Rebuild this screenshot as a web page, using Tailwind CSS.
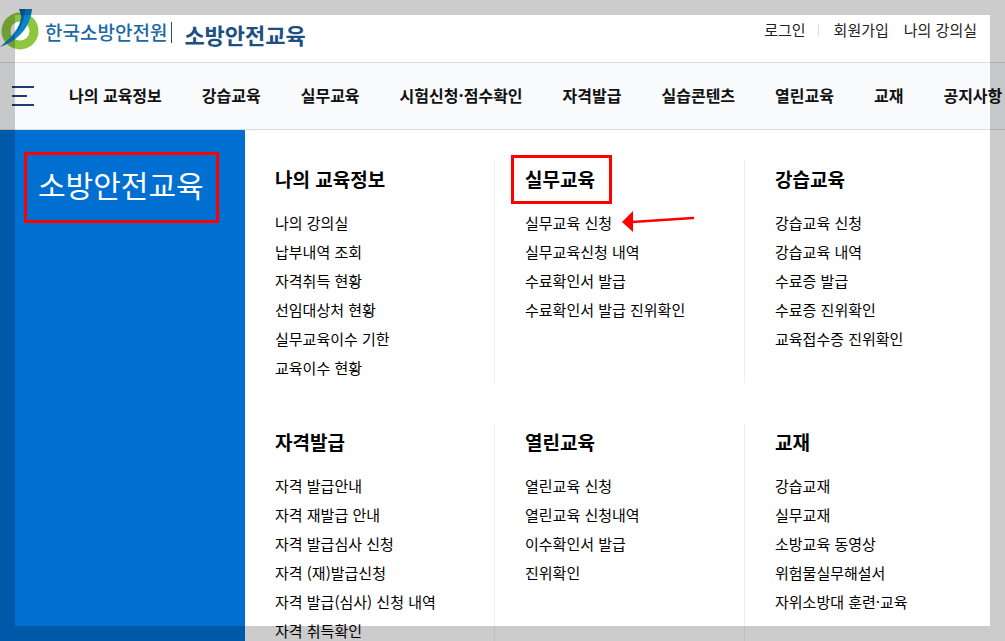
<!DOCTYPE html>
<html lang="ko">
<head>
    <meta charset="UTF-8" />
    <meta name="viewport" content="width=device-width, initial-scale=1" />
    <title>소방안전교육</title>
    <script src="https://cdn.jsdelivr.net/npm/@tailwindcss/browser@4"></script>
</head>
<body class="relative w-[1005px] h-[641px] overflow-hidden bg-white text-black font-['Noto_Sans_CJK_KR','Noto_Sans',sans-serif]">

<!-- Top bar -->
<header class="h-[63px] border-b border-[#dcdcdc] flex justify-between">
    <div class="flex items-start pt-[9px]">
        <svg class="w-[42px] h-[42px] shrink-0" viewBox="0 0 42 42">
            <circle cx="20" cy="22" r="18.5" fill="#8dc63f"/>
            <circle cx="20" cy="22" r="9.5" fill="#fff"/>
            <path d="M19 0 L32 0 C31 13 23 30 0 38 C10 30 21 18 21 8 C21 4 20 2 19 0 Z" fill="#0a84c6"/>
            <path d="M19 0 L25 0 C25 8 22 18 15 26 C19 18 21 12 21 8 C21 4 20 2 19 0 Z" fill="#0b5ea8"/>
        </svg>
        <span class="ml-[3px] mt-[9px] text-[19px] leading-[28px] text-[#1b6aa5] font-medium">한국소방안전원</span>
        <span class="ml-[4px] mt-[13px] h-[21px] w-px bg-[#1c4f82]"></span>
        <span class="ml-[12px] mt-[11px] text-[22px] leading-[28px] text-[#1c4f82] font-bold">소방안전교육</span>
    </div>
    <div class="flex items-start pt-[20px] pr-[28px] text-[15px] leading-[20px] text-[#222]">
        <a>로그인</a>
        <span class="ml-[12px] mr-[15px] mt-[4px] h-[12px] w-px bg-[#ddd]"></span>
        <a>회원가입</a>
        <a class="ml-[15px]">나의 강의실</a>
    </div>
</header>

<!-- Main nav -->
<nav class="h-[67px] border-b border-[#dcdcdc] bg-[#f8fafc] flex items-center whitespace-nowrap">
    <div class="ml-[12px] mr-[35px] w-[22px] flex flex-col gap-[7px]">
        <span class="h-[2px] w-[22px] bg-[#1c3f73]"></span>
        <span class="h-[2px] w-[15px] bg-[#1c3f73]"></span>
        <span class="h-[2px] w-[22px] bg-[#1c3f73]"></span>
    </div>
    <div class="flex gap-[40px] pb-[2px] text-[16px] font-bold text-[#111]">
        <a>나의 교육정보</a>
        <a>강습교육</a>
        <a>실무교육</a>
        <a>시험신청·점수확인</a>
        <a>자격발급</a>
        <a>실습콘텐츠</a>
        <a>열린교육</a>
        <a>교재</a>
        <a>공지사항</a>
    </div>
</nav>

<!-- Mega menu -->
<main class="flex h-[511px]">
    <aside class="w-[245px] shrink-0 bg-[#006fd2] pl-[38px] pt-[32px]">
        <h1 class="text-[30px] leading-[44px] text-white">소방안전교육</h1>
    </aside>
    <div class="grid grid-cols-[250px_250px_250px] grid-rows-[223px_auto] gap-y-[40px] pt-[30px] text-[15px]">
        <section class="pl-[30px] border-r border-[#eeeeee]">
            <h2 class="text-[19px] font-bold leading-[38px] mb-[10px]">나의 교육정보</h2>
            <ul class="[&>li]:h-[29px] [&>li]:leading-[29px]">
                <li>나의 강의실</li>
                <li>납부내역 조회</li>
                <li>자격취득 현황</li>
                <li>선임대상처 현황</li>
                <li>실무교육이수 기한</li>
                <li>교육이수 현황</li>
            </ul>
        </section>
        <section class="pl-[30px] border-r border-[#eeeeee]">
            <h2 class="text-[19px] font-bold leading-[38px] mb-[10px]">실무교육</h2>
            <ul class="[&>li]:h-[29px] [&>li]:leading-[29px]">
                <li>실무교육 신청</li>
                <li>실무교육신청 내역</li>
                <li>수료확인서 발급</li>
                <li>수료확인서 발급 진위확인</li>
            </ul>
        </section>
        <section class="pl-[30px]">
            <h2 class="text-[19px] font-bold leading-[38px] mb-[10px]">강습교육</h2>
            <ul class="[&>li]:h-[29px] [&>li]:leading-[29px]">
                <li>강습교육 신청</li>
                <li>강습교육 내역</li>
                <li>수료증 발급</li>
                <li>수료증 진위확인</li>
                <li>교육접수증 진위확인</li>
            </ul>
        </section>
        <section class="pl-[30px] border-r border-[#eeeeee]">
            <h2 class="text-[19px] font-bold leading-[38px] mb-[10px]">자격발급</h2>
            <ul class="[&>li]:h-[29px] [&>li]:leading-[29px]">
                <li>자격 발급안내</li>
                <li>자격 재발급 안내</li>
                <li>자격 발급심사 신청</li>
                <li>자격 (재)발급신청</li>
                <li>자격 발급(심사) 신청 내역</li>
                <li>자격 취득확인</li>
            </ul>
        </section>
        <section class="pl-[30px] border-r border-[#eeeeee]">
            <h2 class="text-[19px] font-bold leading-[38px] mb-[10px]">열린교육</h2>
            <ul class="[&>li]:h-[29px] [&>li]:leading-[29px]">
                <li>열린교육 신청</li>
                <li>열린교육 신청내역</li>
                <li>이수확인서 발급</li>
                <li>진위확인</li>
            </ul>
        </section>
        <section class="pl-[30px]">
            <h2 class="text-[19px] font-bold leading-[38px] mb-[10px]">교재</h2>
            <ul class="[&>li]:h-[29px] [&>li]:leading-[29px]">
                <li>강습교재</li>
                <li>실무교재</li>
                <li>소방교육 동영상</li>
                <li>위험물실무해설서</li>
                <li>자위소방대 훈련·교육</li>
            </ul>
        </section>
    </div>
</main>

<!-- Annotations drawn on top of the capture -->
<div class="absolute left-[24px] top-[152px] w-[195px] h-[71px] border-[3px] border-[#ff0000]"></div>
<div class="absolute left-[511px] top-[155px] w-[101px] h-[49px] border-[3px] border-[#ff0000]"></div>
<svg class="absolute left-[620px] top-[210px] w-[76px] h-[24px]" viewBox="0 0 76 24">
    <path d="M73 8 L12 12" stroke="#ff0000" stroke-width="2.5" stroke-linecap="round"/>
    <path d="M2 12 L13 1 L13 22 Z" fill="#ff0000"/>
</svg>

<!-- Dimmed frame around the capture -->
<div class="absolute left-[15px] top-[15px] w-[975px] h-[611px] shadow-[0_0_0_1000px_rgba(0,0,0,0.2)] pointer-events-none"></div>

</body>
</html>
